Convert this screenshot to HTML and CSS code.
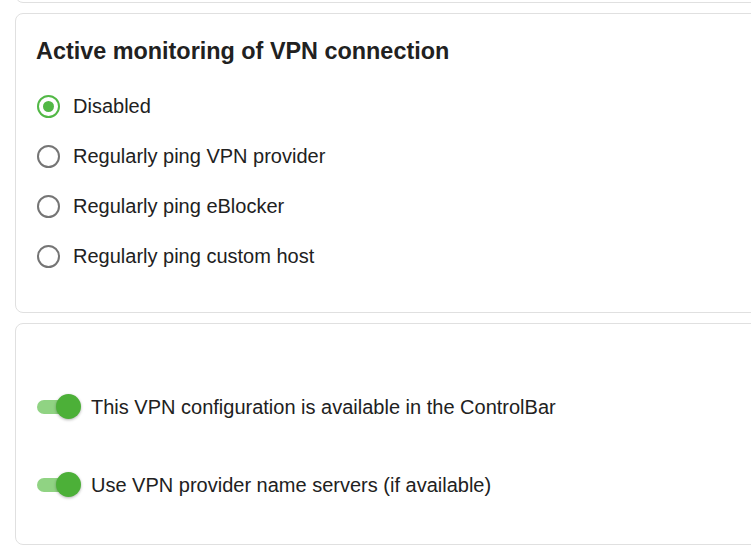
FILE: index.html
```html
<!DOCTYPE html>
<html lang="en">
<head>
<meta charset="utf-8">
<title>VPN settings</title>
<link rel="stylesheet" href="styles.css">
</head>
<body>
<div class="page">
  <div class="card card-prev"></div>

  <section class="card card-monitor">
    <h2 class="card-title">Active monitoring of VPN connection</h2>
    <div class="radio-list">
      <label class="radio-row">
        <span class="radio checked"><span class="dot"></span></span>
        <span class="label">Disabled</span>
      </label>
      <label class="radio-row">
        <span class="radio"></span>
        <span class="label">Regularly ping VPN provider</span>
      </label>
      <label class="radio-row">
        <span class="radio"></span>
        <span class="label">Regularly ping eBlocker</span>
      </label>
      <label class="radio-row">
        <span class="radio"></span>
        <span class="label">Regularly ping custom host</span>
      </label>
    </div>
  </section>

  <section class="card card-options">
    <div class="toggle-list">
      <label class="toggle-row">
        <span class="switch"><span class="track"></span><span class="knob"></span></span>
        <span class="label">This VPN configuration is available in the ControlBar</span>
      </label>
      <label class="toggle-row">
        <span class="switch"><span class="track"></span><span class="knob"></span></span>
        <span class="label">Use VPN provider name servers (if available)</span>
      </label>
    </div>
  </section>
</div>
</body>
</html>
```

FILE: styles.css
```css
html, body {
  margin: 0;
  padding: 0;
  background: #ffffff;
  overflow: hidden;
}

body {
  font-family: "Liberation Sans", Arial, sans-serif;
  color: #212121;
}

.page {
  display: flex;
  flex-direction: column;
  gap: 10px;
  padding-left: 15px;
}

.card {
  box-sizing: border-box;
  width: 800px;
  border: 1px solid #e0e0e0;
  border-radius: 8px;
  background: #ffffff;
}

.card-prev {
  height: 41px;
  margin-top: -38px;
}

.card-monitor {
  height: 300px;
  padding: 23px 20px 0 20px;
}

.card-title {
  margin: 0;
  font-size: 23.4px;
  line-height: 28px;
  font-weight: 700;
  color: #212121;
}

.radio-list {
  margin-top: 16px;
  display: flex;
  flex-direction: column;
}

.radio-row {
  display: flex;
  align-items: center;
  height: 50px;
  gap: 13px;
  padding-left: 1px;
}

.label {
  font-size: 20px;
  line-height: 24px;
  color: #212121;
}

.radio {
  box-sizing: border-box;
  width: 23px;
  height: 23px;
  border: 2px solid #757575;
  border-radius: 50%;
  display: flex;
  align-items: center;
  justify-content: center;
  flex: none;
}

.radio.checked {
  border-color: #52b846;
}

.radio .dot {
  width: 11px;
  height: 11px;
  border-radius: 50%;
  background: #52b846;
}

.card-options {
  height: 222px;
  padding: 58px 20px 0 20px;
}

.toggle-list {
  display: flex;
  flex-direction: column;
  gap: 28px;
}

.toggle-row {
  display: flex;
  align-items: center;
  height: 50px;
  gap: 10px;
}

.switch {
  position: relative;
  width: 45px;
  height: 26px;
  flex: none;
}

.switch .track {
  position: absolute;
  left: 1px;
  top: 6px;
  width: 40px;
  height: 14px;
  border-radius: 7px;
  background: #90d383;
}

.switch .knob {
  position: absolute;
  left: 20px;
  top: 0;
  width: 25px;
  height: 25px;
  border-radius: 50%;
  background: #4cb038;
  box-shadow: 0 1px 3px rgba(0, 0, 0, 0.3);
}
```
